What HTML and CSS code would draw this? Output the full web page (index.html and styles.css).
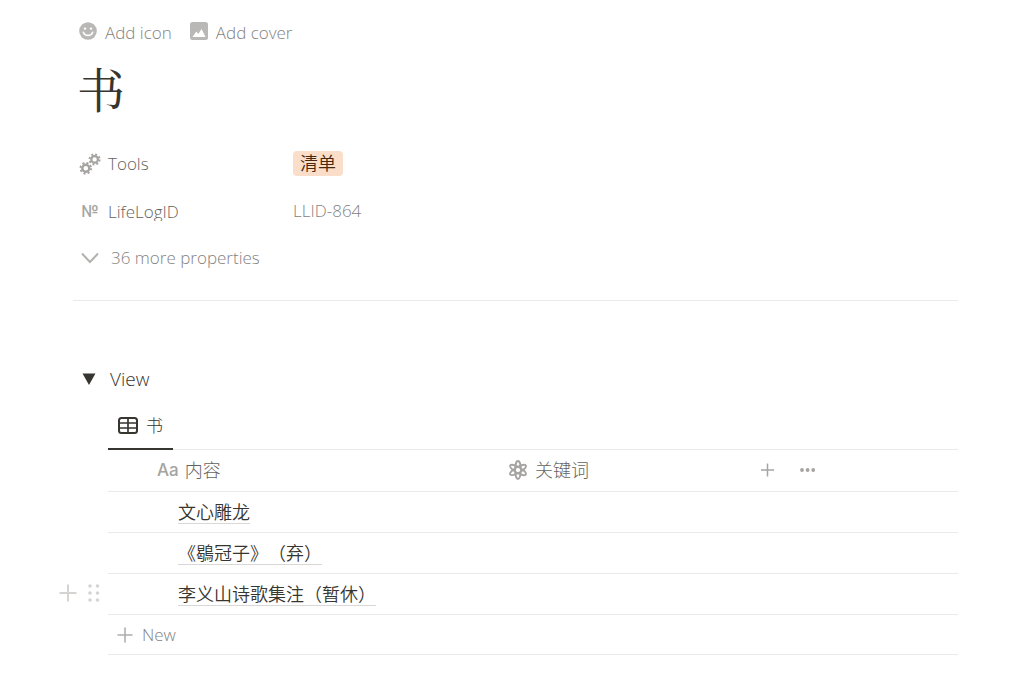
FILE: index.html
```html
<!DOCTYPE html>
<html lang="zh-CN">
<head>
<meta charset="utf-8">
<meta name="viewport" content="width=device-width, initial-scale=1">
<title>书</title>
<link rel="stylesheet" href="styles.css">
</head>
<body>
<main class="page">
  <div class="page-actions">
    <button class="action" type="button">
      <svg class="icon" width="18" height="18" viewBox="0 0 18 18" aria-hidden="true"><circle cx="9" cy="9" r="8.8" fill="#b9b8b6"/><circle cx="6" cy="6.6" r="1.2" fill="#fff"/><circle cx="12" cy="6.6" r="1.2" fill="#fff"/><path d="M4.400 10.200c.6 2 2.400 3.200 4.600 3.200s4-1.200 4.600-3.200" fill="none" stroke="#fff" stroke-width="1.600" stroke-linecap="round"/></svg>
      <span>Add icon</span>
    </button>
    <button class="action" type="button">
      <svg class="icon" width="18" height="18" viewBox="0 0 18 18" aria-hidden="true"><rect width="18" height="18" rx="2.500" fill="#b9b8b6"/><path d="M2.500 15l3.800-5.500 2 2.400 3.300-5L15.500 15z" fill="#fff"/></svg>
      <span>Add cover</span>
    </button>
  </div>

  <h1 class="title">书</h1>

  <dl class="properties">
    <div class="property">
      <dt class="property-name">
        <svg class="property-icon" width="22" height="22" viewBox="0 0 22 22" fill="none" stroke="#a5a4a1" aria-hidden="true"><circle cx="6.800" cy="15.200" r="3.500" stroke-width="2.400"/><circle cx="6.800" cy="15.200" r="5.300" stroke-width="2" stroke-dasharray="2.080 2.080"/><circle cx="15.600" cy="6.400" r="3.300" stroke-width="2.200"/><circle cx="15.600" cy="6.400" r="5" stroke-width="2" stroke-dasharray="1.960 1.960"/></svg>
        <span>Tools</span>
      </dt>
      <dd class="property-value"><span class="tag">清单</span></dd>
    </div>
    <div class="property">
      <dt class="property-name"><span class="property-icon numero" aria-hidden="true">№</span><span class="clip">LifeLogID</span></dt>
      <dd class="property-value muted">LLID-864</dd>
    </div>
  </dl>
  <button class="more" type="button">
    <svg class="property-icon" width="22" height="18" viewBox="0 0 22 18" fill="none" stroke="#b3b2af" stroke-width="2" aria-hidden="true"><path d="M3 4.500l8 8.500 8-8.500"/></svg>
    <span>36 more properties</span>
  </button>

  <hr class="divider">

  <section class="view">
    <button class="toggle" type="button" aria-expanded="true">
      <svg width="14" height="12" viewBox="0 0 14 12" fill="#37352f" aria-hidden="true"><path d="M.5 .5h13L7 12z"/></svg>
      <span>View</span>
    </button>

    <div class="database">
      <div class="tabs" role="tablist">
        <button class="tab" type="button" role="tab" aria-selected="true">
          <svg width="20" height="17" viewBox="0 0 20 17" fill="none" stroke="#37352f" stroke-width="2" aria-hidden="true"><rect x="1" y="1" width="18" height="15" rx="2.500"/><path d="M1 6h18M1 11h18M10 1v15" stroke-width="1.700"/></svg>
          <span>书</span>
        </button>
      </div>

      <table class="table">
        <colgroup><col class="col-name"><col class="col-keyword"><col></colgroup>
        <thead>
          <tr>
            <th class="head-name" scope="col"><span class="head head-title"><span class="type-aa" aria-hidden="true">Aa</span>内容</span></th>
            <th scope="col"><span class="head">
              <svg width="20" height="22" viewBox="0 0 20 22" fill="none" stroke="#a5a4a1" stroke-width="1.800" aria-hidden="true"><ellipse cx="10" cy="11" rx="2.900" ry="9"/><ellipse cx="10" cy="11" rx="2.900" ry="9" transform="rotate(60 10 11)"/><ellipse cx="10" cy="11" rx="2.900" ry="9" transform="rotate(120 10 11)"/></svg>
              关键词</span></th>
            <td><span class="head-tools">
              <button class="tool" type="button" aria-label="Add property"><svg width="14" height="14" viewBox="0 0 14 14" stroke="#a5a4a1" stroke-width="1.500" aria-hidden="true"><path d="M6.500 .5v13M0 7h13"/></svg></button>
              <button class="tool" type="button" aria-label="More options"><svg width="16" height="14" viewBox="0 0 16 14" fill="#a5a4a1" aria-hidden="true"><circle cx="2" cy="7" r="1.900"/><circle cx="7.600" cy="7" r="1.900"/><circle cx="13.200" cy="7" r="1.900"/></svg></button>
            </span></td>
          </tr>
        </thead>
        <tbody>
          <tr><td class="cell-name"><a class="entry" href="#">文心雕龙</a></td><td></td><td></td></tr>
          <tr><td class="cell-name"><a class="entry" href="#">《鶡冠子》（弃）</a></td><td></td><td></td></tr>
          <tr><td class="cell-name">
            <span class="row-handles">
              <button class="tool" type="button" aria-label="Insert row"><svg width="18" height="18" viewBox="0 0 18 18" stroke="#d5d4d2" stroke-width="2" aria-hidden="true"><path d="M9 .5v17M.5 9h17"/></svg></button>
              <button class="tool" type="button" aria-label="Drag row"><svg width="12" height="18" viewBox="0 0 12 18" fill="#d5d4d2" aria-hidden="true"><circle cx="2" cy="2" r="1.800"/><circle cx="9.500" cy="2" r="1.800"/><circle cx="2" cy="9" r="1.800"/><circle cx="9.500" cy="9" r="1.800"/><circle cx="2" cy="16" r="1.800"/><circle cx="9.500" cy="16" r="1.800"/></svg></button>
            </span>
            <a class="entry" href="#">李义山诗歌集注（暂休）</a></td><td></td><td></td></tr>
        </tbody>
      </table>
      <button class="new-row" type="button">
        <svg width="16" height="16" viewBox="0 0 16 16" stroke="#b0afac" stroke-width="1.600" aria-hidden="true"><path d="M8 .5v15M.5 8h15"/></svg>
        <span>New</span>
      </button>
    </div>
  </section>
</main>
</body>
</html>
```
FILE: styles.css
```css
* { box-sizing: border-box; }

body {
  margin: 0;
  background: #fff;
  color: #37352f;
  font-family: "Open Sans", "Noto Sans CJK SC", sans-serif;
  font-size: 18px;
  font-weight: 300;
  line-height: 24px;
  text-spacing-trim: space-all;
}

button {
  display: flex;
  align-items: center;
  padding: 0;
  border: 0;
  background: none;
  color: inherit;
  font: inherit;
  cursor: pointer;
}

svg { display: block; flex: none; }

.page { padding: 21px 58px 32px 73px; }

.page-actions {
  display: flex;
  gap: 18px;
  padding-left: 6px;
  color: #84837f;
  font-size: 17px;
}
.action { gap: 8px; }
.icon { margin-bottom: 4px; }

.title {
  margin: 9px 0 0 4px;
  font-family: "Noto Serif CJK SC", "Noto Serif SC", "Noto Sans CJK SC", serif;
  font-size: 48px;
  font-weight: 400;
  line-height: 68px;
}

.properties { margin: 18px 0 0; }
.property { display: flex; height: 47px; align-items: center; }
.property-name {
  display: flex;
  flex: 0 0 220px;
  align-items: center;
  gap: 7px;
  padding-left: 6px;
  color: #64635e;
  font-size: 17px;
}
.property-icon { width: 22px; }
.numero {
  color: #a5a4a1;
  font-family: Inter, sans-serif;
  font-size: 16px;
  font-weight: 500;
  text-align: center;
}
.clip { height: 21px; overflow: hidden; line-height: 23px; }
.property-value { margin: 0; font-size: 17px; }
.muted { color: #84837f; }
.tag {
  display: block;
  padding: 0 7px;
  border-radius: 4px;
  background: #fadec9;
  color: #49290e;
  font-size: 18px;
  font-weight: 350;
  line-height: 25px;
}
.more {
  gap: 10px;
  height: 48px;
  padding-left: 6px;
  color: #84837f;
  font-size: 17px;
}

.divider {
  margin: 18px 0 0;
  border: 0;
  border-top: 1px solid #e9e9e7;
}

.view { padding-top: 66px; }
.toggle { gap: 14px; padding-left: 9px; font-size: 19px; font-weight: 350; }
.database { padding: 12px 0 0 35px; }
.tabs { display: flex; border-bottom: 1px solid #e9e9e7; }
.tab {
  gap: 8px;
  height: 47px;
  margin-bottom: -1px;
  padding: 0 10px;
  border-bottom: 2px solid #37352f;
  font-size: 17px;
}

.table { width: 100%; border-collapse: collapse; table-layout: fixed; }
.col-name { width: 400px; }
.col-keyword { width: 253px; }
.table th,
.table td {
  height: 41px;
  padding: 0;
  border-bottom: 1px solid #e9e9e7;
  font-weight: inherit;
  text-align: left;
}
.table .head-name { padding-left: 49px; }
.head { display: flex; align-items: center; gap: 7px; color: #64635e; }
.head-title { gap: 6px; }
.type-aa {
  color: #a5a4a1;
  font-family: Inter, sans-serif;
  font-size: 17px;
  font-weight: 500;
}
.head-tools { display: flex; gap: 25px; }
.table .cell-name { position: relative; padding-left: 70px; }
.entry {
  display: inline-block;
  border-bottom: 1px solid #d9d8d6;
  color: inherit;
  font-weight: 350;
  line-height: 21px;
  text-decoration: none;
  vertical-align: middle;
}
.row-handles {
  position: absolute;
  top: 10px;
  left: -49px;
  display: flex;
  gap: 11px;
}
.new-row {
  gap: 9px;
  width: 100%;
  height: 40px;
  padding: 1px 0 0 9px;
  border-bottom: 1px solid #e9e9e7;
  color: #84837f;
  font-size: 17px;
}
```
